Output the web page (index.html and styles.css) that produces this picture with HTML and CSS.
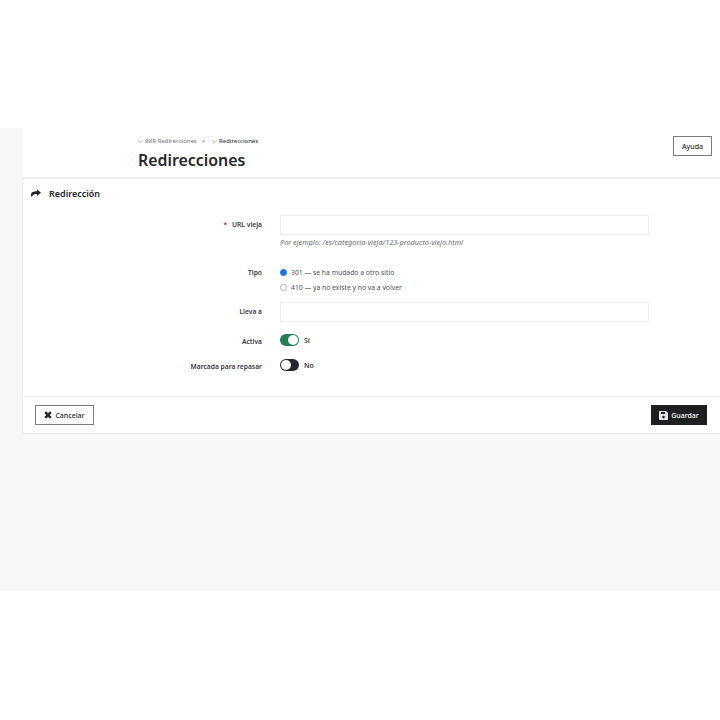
FILE: index.html
```html
<!DOCTYPE html>
<html lang="es">
<head>
<meta charset="utf-8">
<title>Redirecciones</title>
<link rel="stylesheet" href="styles.css">
</head>
<body>
<main class="shell">
  <header class="head">
    <div class="head-text">
      <nav class="crumbs">
        <span class="crumb"><svg class="chev" viewBox="0 0 8 4"><path d="M.5.5 4 3.500 7.500.5"/></svg>RKR Redirecciones</span>
        <span class="sep">&gt;</span>
        <span class="crumb crumb-now"><svg class="chev" viewBox="0 0 8 4"><path d="M.5.5 4 3.500 7.500.5"/></svg>Redirecciones</span>
      </nav>
      <h1 class="title">Redirecciones</h1>
    </div>
    <button class="btn btn-help">Ayuda</button>
  </header>
  <section class="card">
    <h2 class="card-title">
      <svg class="share" viewBox="0 0 12 10"><path d="M7 0l5 4-5 4V5.600C3.800 5.500 2 6.500 1 9.500.3 8.700 0 7.500 0 6.500 0 3.800 3 2.400 7 2.400z"/></svg>
      Redirección
    </h2>
    <div class="form">
      <div class="row row-url">
        <label class="label"><span class="req">*</span>URL vieja</label>
        <div class="field">
          <div class="input"></div>
          <p class="hint">Por ejemplo: /es/categoria-vieja/123-producto-viejo.html</p>
        </div>
      </div>
      <div class="row row-type">
        <label class="label">Tipo</label>
        <div class="field radios">
          <div class="radio-line"><span class="radio radio-on"></span>301 — se ha mudado a otro sitio</div>
          <div class="radio-line"><span class="radio"></span>410 — ya no existe y no va a volver</div>
        </div>
      </div>
      <div class="row row-link">
        <label class="label">Lleva a</label>
        <div class="field"><div class="input"></div></div>
      </div>
      <div class="row row-active">
        <label class="label">Activa</label>
        <div class="field switch-line"><span class="switch switch-on"></span><span class="switch-text">Sí</span></div>
      </div>
      <div class="row row-review">
        <label class="label">Marcada para repasar</label>
        <div class="field switch-line"><span class="switch"></span><span class="switch-text">No</span></div>
      </div>
    </div>
    <footer class="card-foot">
      <button class="btn btn-cancel"><svg class="x" viewBox="0 0 10 10"><path d="M2.600 .4 5 2.800 7.400 .4 9.600 2.600 7.200 5 9.600 7.400 7.400 9.600 5 7.200 2.600 9.600 .4 7.400 2.800 5 .4 2.600z"/></svg>Cancelar</button>
      <button class="btn btn-save"><svg class="disk" viewBox="0 0 10 10"><path fill-rule="evenodd" d="M1 0h6.800L10 2.200V9a1 1 0 0 1-1 1H1a1 1 0 0 1-1-1V1a1 1 0 0 1 1-1zm1.200 1v2.400h4.600V1zM5 5.200a1.500 1.500 0 1 0 0 3 1.500 1.500 0 0 0 0-3z"/></svg>Guardar</button>
    </footer>
  </section>
</main>
</body>
</html>
```
FILE: styles.css
```css
* { box-sizing: border-box; }
html, body { margin: 0; background: #fff; }
body {
  padding-top: 128px;
  font-family: "Noto Sans", "Liberation Sans", sans-serif;
  color: #25282b;
}
.shell {
  height: 463px;
  padding-left: 22px;
  background: #f7f7f7;
}
.head {
  display: flex;
  justify-content: space-between;
  height: 49px;
  padding: 8px 8px 0 116px;
  background: #fff;
}
.crumbs {
  display: flex;
  align-items: center;
  gap: 5px;
  height: 10px;
  font-size: 5.900px;
  font-weight: 500;
  color: #7b8389;
}
.crumb { display: flex; align-items: center; gap: 2px; }
.crumb-now { margin-left: 1px; color: #363a41; }
.sep { color: #5f666b; margin-right: 1px; }
.chev { width: 5px; height: 3px; fill: none; stroke: #8a9197; stroke-width: 1; }
.title {
  margin: 4px 0 0;
  font-size: 15.900px;
  line-height: 20px;
  font-weight: 600;
  color: #25282b;
}
.btn {
  display: flex;
  align-items: center;
  justify-content: center;
  font-family: inherit;
  font-size: 7px;
  font-weight: 500;
  padding: 0;
  border: 1px solid #7c7c7c;
  background: #fff;
  color: #25282b;
}
.btn-help { width: 39px; height: 20px; margin-top: 0; }
.card {
  height: 257px;
  background: #fff;
  border-top: 2px solid #ececec;
  border-left: 1px solid #ececec;
  border-bottom: 1px solid #e8e8e8;
}
.card-title {
  display: flex;
  align-items: center;
  gap: 8px;
  height: 29px;
  margin: 0;
  padding-left: 8px;
  font-size: 9px;
  font-weight: 600;
}
.share { width: 10px; height: 9px; fill: #25282b; }
.form { height: 188px; padding-top: 7px; }
.row { display: flex; }
.row-url { height: 51px; }
.row-type { height: 36px; }
.row-link { height: 31px; }
.row-active { height: 26px; }
.row-review { height: 25px; }
.label {
  flex: none;
  width: 239px;
  padding-top: 5px;
  font-size: 6.700px;
  line-height: 9px;
  font-weight: 600;
  text-align: right;
  color: #363a41;
}
.req { color: #c4324a; margin-right: 5px; }
.field { margin-left: 18px; width: 369px; }
.input { height: 20px; border: 1px solid #eeeeee; background: #fff; }
.hint {
  margin: 2px 0 0;
  font-size: 7.300px;
  line-height: 10px;
  font-style: italic;
  color: #666c72;
}
.row-type .label { padding-top: 2px; }
.radios { display: flex; flex-direction: column; gap: 6px; padding-top: 2px; }
.radio-line {
  display: flex;
  align-items: center;
  gap: 4px;
  font-size: 6.800px;
  line-height: 9px;
  color: #4a4f54;
}
.radio {
  flex: none;
  width: 7px;
  height: 7px;
  border: 1px solid #b0b0b0;
  border-radius: 50%;
  background: #fff;
}
.radio-on { border: 1px solid #1a73e8; background: #1a73e8; }
.row-active .label, .row-review .label { padding-top: 4px; }
.row-review .label { padding-top: 3px; }
.switch-line { display: flex; align-items: center; gap: 5px; height: 12px; margin-top: 1px; }
.row-review .switch-line { margin-top: 0; }
.switch {
  position: relative;
  flex: none;
  width: 19px;
  height: 12px;
  border-radius: 6px;
  background: #25282b;
}
.switch::after {
  content: "";
  position: absolute;
  left: 1px;
  top: 1px;
  width: 10px;
  height: 10px;
  border-radius: 50%;
  background: #fff;
}
.switch-on { background: #1f7f4d; }
.switch-on::after { left: 8px; }
.switch-text { font-size: 7px; font-weight: 600; color: #363a41; }
.card-foot {
  display: flex;
  justify-content: space-between;
  align-items: center;
  height: 37px;
  padding: 0 13px 0 12px;
  border-top: 1px solid #ececec;
}
.btn-cancel { width: 59px; height: 20px; gap: 3px; }
.x { width: 8px; height: 8px; fill: #25282b; }
.btn-save {
  width: 56px;
  height: 20px;
  gap: 3px;
  background: #1f1f1f;
  border-color: #1f1f1f;
  color: #fff;
}
.disk { width: 9px; height: 9px; fill: #e8e8e8; }
```
